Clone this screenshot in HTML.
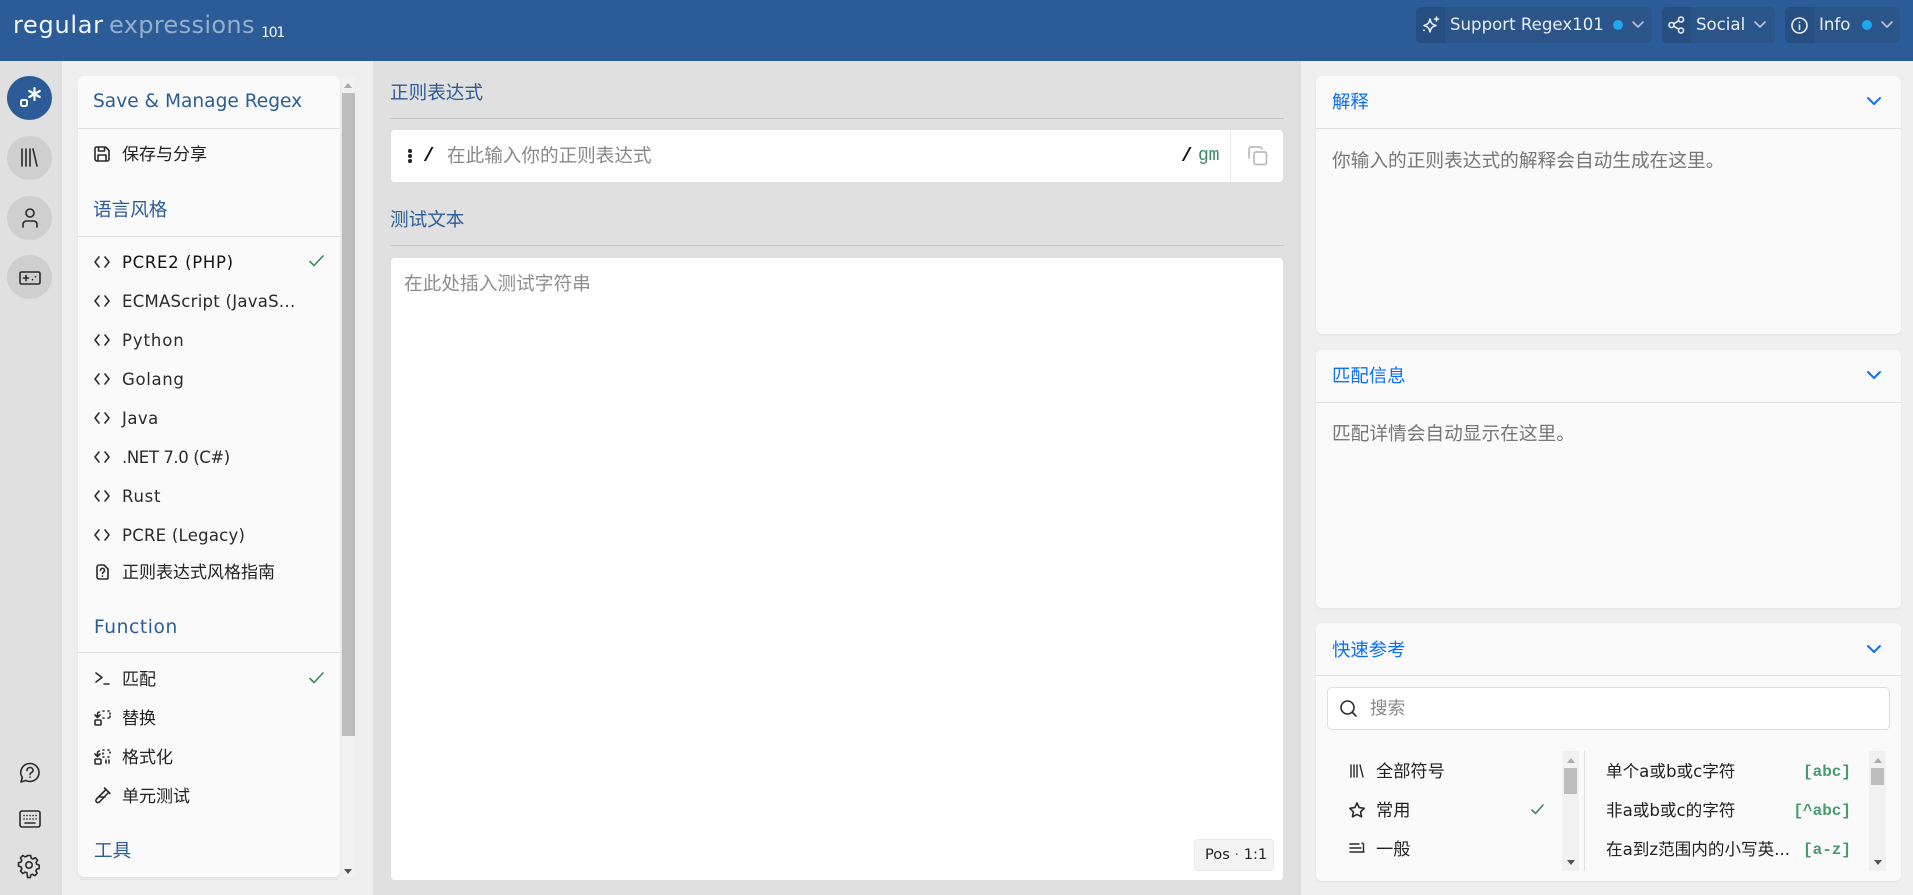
<!DOCTYPE html>
<html lang="zh"><head><meta charset="utf-8"><title>regex101</title>
<style>
html,body{margin:0;padding:0;width:1913px;height:895px;overflow:hidden;background:#e0e0e0}
body{position:relative;font-family:"DejaVu Sans","Noto Sans CJK SC",sans-serif;color:#222}
div,svg,span.a{position:absolute}
.t{position:absolute;white-space:nowrap;line-height:24px;height:24px}
.cn{font-family:"Liberation Sans","Noto Sans CJK SC",sans-serif}
.h{color:#2c5c97;font-size:18.6px}
.it{font-size:16.5px;color:#2a2a2a}
.cj{font-size:17px;color:#222;font-family:"Liberation Sans","Noto Sans CJK SC",sans-serif}
.cm{font-size:17px;color:#222;font-family:"DejaVu Sans","Noto Sans CJK SC",sans-serif}
.card{background:#fafafa;border-radius:6px;box-shadow:0 1px 2px rgba(0,0,0,.06)}
.ln{height:1px;background:#e2e2e2}
.bt{color:#0d6efd;font-size:18.4px;font-family:"Liberation Sans","Noto Sans CJK SC",sans-serif}
.bd{color:#777;font-size:18.7px;font-family:"Liberation Sans","Noto Sans CJK SC",sans-serif}
svg{fill:none;stroke:#2a2a2a;stroke-width:1.6;stroke-linecap:round;stroke-linejoin:round;overflow:visible}
.hb{background:#2b5488;border-radius:5px;top:7px;height:36px}
.hi{background:#274e80;border-radius:5px 0 0 5px;top:7px;height:36px;width:29px}
.hbt{color:#e8eef6;font-size:16.6px;top:13px}
.dot{width:10px;height:10px;border-radius:50%;background:#1ea7ec;top:20px}
.cir{left:7px;width:45px;height:44px;border-radius:50%;background:#cfcfcf}
.code{font-family:"Liberation Mono",monospace;font-size:16px;font-weight:700;color:#4a9a70;text-align:right}
.up{width:0;height:0;border-left:4px solid transparent;border-right:4px solid transparent;border-bottom:5px solid #aaa}
.dn{width:0;height:0;border-left:4px solid transparent;border-right:4px solid transparent;border-top:5px solid #555}
</style></head><body>

<!-- header -->
<div style="left:0;top:0;width:1913px;height:61px;background:#2c5c97"></div>
<span class="t" style="left:13px;top:11px;color:#f2f5f9;font-size:24px;line-height:28px;height:28px;letter-spacing:.7px">regular</span>
<span class="t" style="left:109px;top:11px;color:#95aecb;font-size:24px;line-height:28px;height:28px;letter-spacing:.35px">expressions</span>
<span class="t" style="left:261px;top:21px;color:#f2f5f9;font-size:14px;letter-spacing:-1.2px">101</span>

<div class="hb" style="left:1416px;width:236px"></div><div class="hi" style="left:1416px"></div>
<svg style="left:1422px;top:15px" width="18" height="20" viewBox="0 0 18 20"><path stroke="#e8eef6" d="M8 4c.8 4 2.200 5.500 6 6.500-3.800 1-5.200 2.500-6 6.500-.8-4-2.200-5.500-6-6.500 3.800-1 5.200-2.500 6-6.500zM14.500 2v4M12.500 4h4M2 15v.5"/></svg>
<span class="t hbt" style="left:1450px">Support Regex101</span>
<div class="dot" style="left:1613px"></div>
<svg style="left:1632px;top:21px" width="12" height="8"><path stroke="#b7c6da" d="M1 1l5 5 5-5"/></svg>

<div class="hb" style="left:1662px;width:113px"></div><div class="hi" style="left:1662px"></div>
<svg style="left:1668px;top:16px" width="17" height="18"><g stroke="#e8eef6"><circle cx="13" cy="3.500" r="2.500"/><circle cx="13" cy="14.500" r="2.500"/><circle cx="3.500" cy="9" r="2.500"/><path d="M5.700 7.800l5-3M5.700 10.200l5 3"/></g></svg>
<span class="t hbt" style="left:1696px">Social</span>
<svg style="left:1754px;top:21px" width="12" height="8"><path stroke="#b7c6da" d="M1 1l5 5 5-5"/></svg>

<div class="hb" style="left:1785px;width:115px"></div><div class="hi" style="left:1785px"></div>
<svg style="left:1791px;top:17px" width="17" height="17"><g stroke="#e8eef6"><circle cx="8.500" cy="8.500" r="7.500"/><path d="M8.500 8v4.500M8.500 5v.2"/></g></svg>
<span class="t hbt" style="left:1819px">Info</span>
<div class="dot" style="left:1862px"></div>
<svg style="left:1881px;top:21px" width="12" height="8"><path stroke="#b7c6da" d="M1 1l5 5 5-5"/></svg>

<!-- left rail -->
<div style="left:0;top:61px;width:62px;height:834px;background:#e0e0e0"></div>
<div class="cir" style="top:76px;background:#2c5c97"></div>
<svg style="left:20px;top:87px" width="21" height="21"><rect x="1" y="13" width="6" height="6" rx="1.500" stroke="#fff" stroke-width="2"/><path stroke="#fff" stroke-width="2.200" d="M14.500 1v12M9.300 4l10.400 6M19.700 4L9.300 10"/></svg>
<div class="cir" style="top:136px"></div>
<svg style="left:20px;top:148px" width="18" height="19" stroke-width="1.800"><path d="M2 1v17M6 1v17M10 1v17M13 1l4 17"/></svg>
<div class="cir" style="top:196px"></div>
<svg style="left:21px;top:207px" width="18" height="22"><circle cx="9" cy="6" r="4"/><path d="M2 20v-2.500c0-2 1.500-3.500 3.500-3.500h7c2 0 3.500 1.500 3.500 3.500V20"/></svg>
<div class="cir" style="top:255px"></div>
<svg style="left:19px;top:271px" width="22" height="15"><rect x="1" y="1" width="20" height="12" rx="1.500"/><path d="M4.500 7h5M7 4.500v5M13.500 8.500v.2M16.500 5.500v.2"/></svg>
<svg style="left:19px;top:762px" width="22" height="22"><path d="M11 1.500a9 9 0 0 1 0 18c-1.500 0-3-.4-4.300-1L2 20l1.300-4.500A9 9 0 0 1 11 1.500z"/><path d="M8 8.500c0-4 6-4 6 0 0 2-3 2-3 4M11 15v.2"/></svg>
<svg style="left:19px;top:810px" width="22" height="18"><rect x="1" y="1" width="20" height="16" rx="2"/><path d="M5 5.500h.1M8 5.500h.1M11 5.500h.1M14 5.500h.1M17 5.500h.1M5 9h.1M8 9h.1M11 9h.1M14 9h.1M17 9h.1M6 13h10"/></svg>
<svg style="left:18px;top:854px" width="22" height="22"><circle cx="11" cy="11" r="3.200"/><path d="M9.300 1.500h3.400l.5 2.700 1.700.8 2.400-1.300 2.300 2.500-1.500 2.200.6 1.800 2.500.9v3.400l-2.600.8-.7 1.700 1.300 2.300-2.400 2.400-2.300-1.400-1.700.7-.6 2.600H9.600L9 18.800l-1.800-.7-2.300 1.400-2.400-2.400 1.400-2.300-.8-1.800L.5 12V8.800l2.500-.8.800-1.800-1.400-2.300L4.800 1.500l2.300 1.400L9 2.200z"/></svg>

<!-- sidebar -->
<div style="left:62px;top:61px;width:311px;height:834px;background:#efefef"></div>
<div class="card" style="left:78px;top:76px;width:262px;height:801px"></div>
<div class="ln" style="left:78px;top:128px;width:262px"></div>
<div class="ln" style="left:78px;top:236px;width:262px"></div>
<div class="ln" style="left:78px;top:652px;width:262px"></div>
<div class="ln" style="left:80px;top:879px;width:258px"></div>
<div style="left:342px;top:76px;width:13px;height:801px;background:#f1f1f1"></div>
<div style="left:342px;top:93px;width:13px;height:643px;background:#bdbdbd"></div>
<div class="up" style="left:344px;top:83px"></div>
<div class="dn" style="left:344px;top:869px"></div>

<span class="t h" style="left:93px;top:90px">Save &amp; Manage Regex</span>
<svg style="left:94px;top:146px" width="16" height="16"><path d="M2.500 1h9L15 4.500V13a2 2 0 0 1-2 2H3a2 2 0 0 1-2-2V2.500A1.500 1.500 0 0 1 2.500 1zM4.500 1v4h6V1M4 15V9h8v6"/></svg>
<span class="t cj" style="left:122px;top:143px">保存与分享</span>
<span class="t h cn" style="left:93px;top:198px">语言风格</span>

<svg style="left:94px;top:256px" width="16" height="12"><path d="M5 1L1 6l4 5M11 1l4 5-4 5"/></svg>
<span class="t it" style="left:122px;top:251px;color:#111;letter-spacing:.68px">PCRE2 (PHP)</span>
<svg style="left:309px;top:255px" width="15" height="12"><path stroke="#3a8a5f" d="M1 6.500l4 4L14 1"/></svg>
<svg style="left:94px;top:295px" width="16" height="12"><path d="M5 1L1 6l4 5M11 1l4 5-4 5"/></svg>
<span class="t it" style="left:122px;top:290px;letter-spacing:.27px">ECMAScript (JavaS...</span>
<svg style="left:94px;top:334px" width="16" height="12"><path d="M5 1L1 6l4 5M11 1l4 5-4 5"/></svg>
<span class="t it" style="left:122px;top:329px;letter-spacing:.9px">Python</span>
<svg style="left:94px;top:373px" width="16" height="12"><path d="M5 1L1 6l4 5M11 1l4 5-4 5"/></svg>
<span class="t it" style="left:122px;top:368px;letter-spacing:.66px">Golang</span>
<svg style="left:94px;top:412px" width="16" height="12"><path d="M5 1L1 6l4 5M11 1l4 5-4 5"/></svg>
<span class="t it" style="left:122px;top:407px;letter-spacing:.45px">Java</span>
<svg style="left:94px;top:451px" width="16" height="12"><path d="M5 1L1 6l4 5M11 1l4 5-4 5"/></svg>
<span class="t it" style="left:122px;top:446px;letter-spacing:-.4px">.NET 7.0 (C#)</span>
<svg style="left:94px;top:490px" width="16" height="12"><path d="M5 1L1 6l4 5M11 1l4 5-4 5"/></svg>
<span class="t it" style="left:122px;top:485px;letter-spacing:.75px">Rust</span>
<svg style="left:94px;top:529px" width="16" height="12"><path d="M5 1L1 6l4 5M11 1l4 5-4 5"/></svg>
<span class="t it" style="left:122px;top:524px;letter-spacing:.25px">PCRE (Legacy)</span>
<svg style="left:96px;top:564px" width="13" height="16"><path d="M3 1h5l4 4v9a1 1 0 0 1-1 1H3a2 2 0 0 1-2-2V3a2 2 0 0 1 2-2zM4.500 6.500c0-3 4-3 4 0 0 1.500-2 1.500-2 3M6.500 12v.2"/></svg>
<span class="t cj" style="left:122px;top:561px">正则表达式风格指南</span>

<span class="t h" style="left:94px;top:616px;letter-spacing:.6px">Function</span>
<svg style="left:95px;top:672px" width="15" height="13"><path d="M1 1l6 4.500L1 10M9 12h5"/></svg>
<span class="t cj" style="left:122px;top:668px">匹配</span>
<svg style="left:309px;top:672px" width="15" height="12"><path stroke="#3a8a5f" d="M1 6.500l4 4L14 1"/></svg>
<svg style="left:94px;top:710px" width="17" height="16"><path d="M3.500 7V4a2 2 0 0 1 2-2M1 5l2.500 2.500L6 5M9 1h1M14 1h1M16 3v1M16 6v1M9 8h1M14 8h1"/><rect x="1" y="10" width="6" height="5" rx="1"/></svg>
<span class="t cj" style="left:122px;top:707px">替换</span>
<svg style="left:94px;top:749px" width="17" height="16"><path d="M3.500 7V4a2 2 0 0 1 2-2M1 5l2.500 2.500L6 5M9 1h1M9 4v1M9 8h1M14 1h1M16 3v1M14 8h1M12 11v3M15 11v3"/><rect x="1" y="10" width="6" height="5" rx="1"/></svg>
<span class="t cj" style="left:122px;top:746px">格式化</span>
<svg style="left:94px;top:787px" width="17" height="17"><path d="M10.500 1l5.500 5.500M12 2.500L3 11.500c-1.500 1.500-1.500 2.800-.5 3.500 1 .9 2.200.7 3.500-.5L14.500 5.500M6 10h5"/></svg>
<span class="t cj" style="left:122px;top:785px">单元测试</span>
<span class="t h cn" style="left:94px;top:839px">工具</span>

<!-- centre -->
<div style="left:373px;top:61px;width:928px;height:834px;background:#e0e0e0"></div>
<span class="t h cn" style="left:390px;top:81px">正则表达式</span>
<div style="left:390px;top:118px;width:894px;height:1px;background:#c6c6c6"></div>
<div style="left:391px;top:130px;width:892px;height:52px;background:#fff;border-radius:4px"></div>
<div style="left:1230px;top:130px;width:1px;height:52px;background:#e6e6e6"></div>
<span style="position:absolute;left:408px;top:149px;width:4px;height:4px;background:#222;border-radius:50%"></span>
<span style="position:absolute;left:408px;top:154px;width:4px;height:4px;background:#222;border-radius:50%"></span>
<span style="position:absolute;left:408px;top:159px;width:4px;height:4px;background:#222;border-radius:50%"></span>
<span class="t" style="left:423px;top:144px;font-family:'Liberation Mono',monospace;font-size:19px;font-weight:700;color:#111">/</span>
<span class="t cn" style="left:447px;top:144px;font-size:18.6px;color:#888">在此输入你的正则表达式</span>
<span class="t" style="left:1181px;top:144px;font-family:'Liberation Mono',monospace;font-size:19px;font-weight:700;color:#111">/</span>
<span class="t" style="left:1198px;top:144px;font-family:'Liberation Mono',monospace;font-size:18px;color:#3a8a5f;letter-spacing:-.2px">gm</span>
<svg style="left:1248px;top:146px" width="20" height="20"><path stroke="#bbb" stroke-width="1.700" d="M6 1H3a2 2 0 0 0-2 2v9M6 1h6a2 2 0 0 1 2 2"/><rect stroke="#bbb" stroke-width="1.700" x="6" y="6" width="12.500" height="12.500" rx="2"/></svg>

<span class="t h cn" style="left:390px;top:208px">测试文本</span>
<div style="left:390px;top:245px;width:894px;height:1px;background:#c6c6c6"></div>
<div style="left:391px;top:258px;width:892px;height:622px;background:#fff;border-radius:4px"></div>
<span class="t cn" style="left:404px;top:272px;font-size:18.7px;color:#8e8e8e">在此处插入测试字符串</span>
<div style="left:1194px;top:839px;width:78px;height:30px;background:#f3f3f3;border:1px solid #e9e9e9;border-radius:4px"></div>
<span class="t" style="left:1205px;top:843px;font-size:14.6px;color:#222">Pos <span style="color:#777">·</span> 1:1</span>

<!-- right -->
<div style="left:1301px;top:61px;width:612px;height:834px;background:#efefef"></div>
<div class="card" style="left:1316px;top:76px;width:585px;height:258px"></div>
<div class="ln" style="left:1316px;top:128px;width:585px"></div>
<span class="t bt" style="left:1332px;top:90px">解释</span>
<svg style="left:1867px;top:97px" width="14" height="9"><path stroke="#0d6efd" stroke-width="2" d="M1 1l6 6 6-6"/></svg>
<span class="t bd" style="left:1332px;top:149px">你输入的正则表达式的解释会自动生成在这里。</span>

<div class="card" style="left:1316px;top:350px;width:585px;height:258px"></div>
<div class="ln" style="left:1316px;top:402px;width:585px"></div>
<span class="t bt" style="left:1332px;top:364px">匹配信息</span>
<svg style="left:1867px;top:371px" width="14" height="9"><path stroke="#0d6efd" stroke-width="2" d="M1 1l6 6 6-6"/></svg>
<span class="t bd" style="left:1332px;top:422px">匹配详情会自动显示在这里。</span>

<div class="card" style="left:1316px;top:623px;width:585px;height:258px"></div>
<div class="ln" style="left:1316px;top:675px;width:585px"></div>
<span class="t bt" style="left:1332px;top:638px">快速参考</span>
<svg style="left:1867px;top:645px" width="14" height="9"><path stroke="#0d6efd" stroke-width="2" d="M1 1l6 6 6-6"/></svg>
<div style="left:1327px;top:687px;width:561px;height:41px;background:#fff;border:1px solid #dfdfdf;border-radius:5px"></div>
<svg style="left:1340px;top:700px" width="17" height="17"><circle cx="7.500" cy="7.500" r="6.500"/><path d="M12.500 12.500l3.500 3.500"/></svg>
<span class="t cn" style="left:1370px;top:696px;font-size:17.6px;color:#888">搜索</span>

<svg style="left:1350px;top:764px" width="14" height="14"><path d="M1 1v12M4 1v12M7 1v12M10 1l3 12" stroke-width="1.400"/></svg>
<span class="t cj" style="left:1376px;top:759px;font-size:17.2px">全部符号</span>
<svg style="left:1349px;top:802px" width="16" height="16"><path d="M8 1l2.200 4.600 5 .7-3.600 3.500.9 5L8 12.400 3.500 14.800l.9-5L.8 6.300l5-.7z"/></svg>
<span class="t cj" style="left:1376px;top:798px;font-size:17.2px">常用</span>
<svg style="left:1531px;top:804px" width="13" height="11"><path stroke="#3a8a5f" d="M1 6l3.500 3.500L12 1"/></svg>
<svg style="left:1349px;top:842px" width="16" height="12"><path d="M1 2h9M1 6h11M1 10h14M13 1l1.500 1v8" stroke-width="1.400"/></svg>
<span class="t cj" style="left:1376px;top:837px;font-size:17.2px">一般</span>

<div style="left:1562px;top:751px;width:17px;height:120px;background:#f1f1f1"></div>
<div style="left:1564px;top:768px;width:13px;height:26px;background:#bdbdbd"></div>
<div class="up" style="left:1567px;top:758px"></div><div class="dn" style="left:1567px;top:860px"></div>
<div style="left:1584px;top:751px;width:1px;height:120px;background:#e2e2e2"></div>

<span class="t cm" style="left:1606px;top:760px;font-size:16.6px">单个a或b或c字符</span>
<span class="t cm" style="left:1606px;top:799px;font-size:16.6px">非a或b或c的字符</span>
<span class="t cm" style="left:1606px;top:838px;font-size:16.6px">在a到z范围内的小写英...</span>
<span class="t code" style="right:62px;top:760px">[abc]</span>
<span class="t code" style="right:62px;top:799px">[^abc]</span>
<span class="t code" style="right:62px;top:838px">[a-z]</span>
<div style="left:1869px;top:751px;width:17px;height:120px;background:#f1f1f1"></div>
<div style="left:1871px;top:768px;width:13px;height:17px;background:#bdbdbd"></div>
<div class="up" style="left:1874px;top:758px"></div><div class="dn" style="left:1874px;top:860px"></div>
</body></html>
